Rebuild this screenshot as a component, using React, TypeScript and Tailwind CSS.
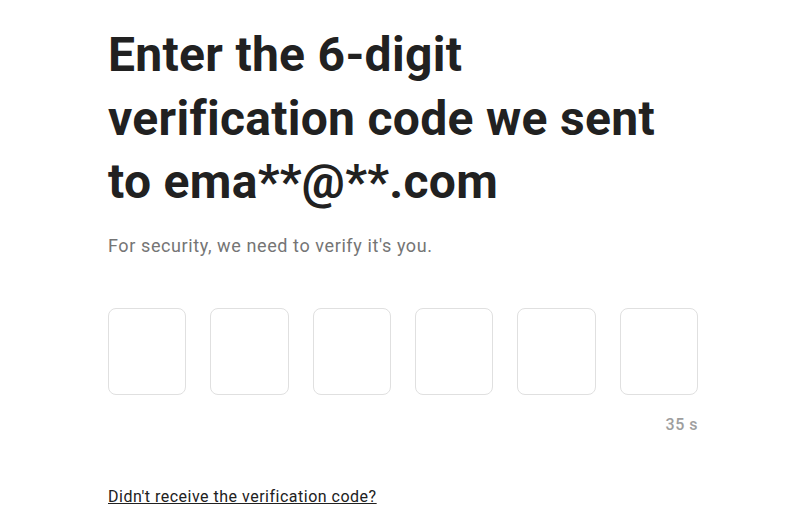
export default function App() {
  const boxes = [0, 1, 2, 3, 4, 5];
  return (
    <div className="w-[795px] h-[516px] bg-white overflow-hidden" style={{ fontFamily: "Roboto, 'Liberation Sans', sans-serif" }}>
      <div className="ml-[108px] w-[590px] pt-[23px]">
        <h1 className="text-[48px] leading-[63.5px] font-bold text-[#212121] w-[570px] tracking-[0.3px]">
          Enter the 6-digit verification code we sent to ema**@**.com
        </h1>
        <p className="mt-[20px] text-[18px] leading-[24px] text-[#757575] tracking-[0.6px]">
          For security, we need to verify it's you.
        </p>
        <div className="mt-[50px] flex gap-6">
          {boxes.map((b) => (
            <div key={b} className="flex-1 h-[87px] rounded-[8px] border border-[#e0e0e0] bg-white" />
          ))}
        </div>
        <div className="mt-[19px] text-right text-[16px] leading-[22px] font-medium text-[#9e9e9e] tracking-[0.5px]">35 s</div>
        <div className="mt-[49px]">
          <a href="#" className="text-[16px] leading-[22px] text-[#212121] underline tracking-[0.5px]">
            Didn't receive the verification code?
          </a>
        </div>
      </div>
    </div>
  );
}
